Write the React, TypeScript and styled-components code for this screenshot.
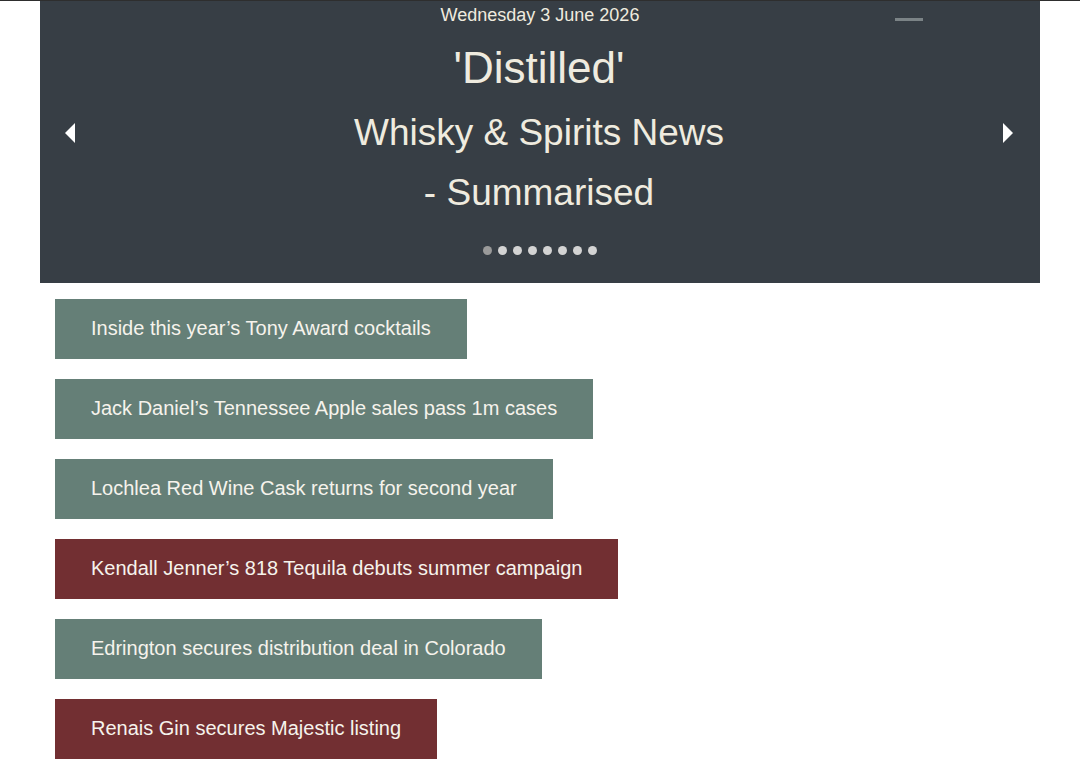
import React from 'react'
import styled, { createGlobalStyle } from 'styled-components'

const GlobalStyle = createGlobalStyle`
  html, body {
    margin: 0;
    padding: 0;
    background: #ffffff;
    font-family: 'Liberation Sans', Arial, sans-serif;
  }
`

const Page = styled.div`
  border-top: 1px solid #2e2e2e;
  min-height: 769px;
`

const Hero = styled.header`
  position: relative;
  margin: 0 40px;
  height: 282px;
  background: #373e45;
  color: #efebdf;
  display: flex;
  flex-direction: column;
  align-items: center;
`

const DateLine = styled.div`
  font-size: 18px;
  line-height: 29px;
`

const Minimise = styled.span`
  position: absolute;
  top: 17px;
  left: 855px;
  width: 28px;
  height: 3px;
  background: #7b8386;
`

const Stage = styled.div`
  width: 100%;
  box-sizing: border-box;
  padding: 0 27px 0 25px;
  display: grid;
  grid-template-columns: 10px 1fr 10px;
  align-items: center;
`

const Arrow = styled.button<{ $dir: 'left' | 'right' }>`
  width: 0;
  height: 0;
  padding: 0;
  margin-top: 12px;
  background: none;
  cursor: pointer;
  border-top: 10px solid transparent;
  border-bottom: 10px solid transparent;
  border-left: ${p => (p.$dir === 'right' ? '10px solid #ffffff' : '0')};
  border-right: ${p => (p.$dir === 'left' ? '10px solid #ffffff' : '0')};
`

const Slide = styled.div`
  text-align: center;
`

const Title = styled.h1`
  margin: 10px 0 0;
  font-size: 44px;
  line-height: 56px;
  font-weight: 400;
`

const Subtitle = styled.h2<{ $tight?: boolean }>`
  margin: ${p => (p.$tight ? '0' : '7px')} 0 0;
  font-size: 37px;
  line-height: 60px;
  font-weight: 400;
`

const Dots = styled.div`
  display: flex;
  gap: 6px;
  margin-top: 23px;
`

const Dot = styled.span<{ $active?: boolean }>`
  width: 9px;
  height: 9px;
  border-radius: 50%;
  background: ${p => (p.$active ? '#9a9a9a' : '#d3d3d3')};
`

const List = styled.ul`
  list-style: none;
  margin: 0;
  padding: 16px 0 0 55px;
  display: flex;
  flex-direction: column;
  align-items: flex-start;
  gap: 20px;
`

const Story = styled.li<{ $tone: 'green' | 'red' }>`
  height: 60px;
  box-sizing: border-box;
  padding: 0 36px 2px;
  display: flex;
  align-items: center;
  font-size: 20px;
  color: #f6f3ec;
  background: ${p => (p.$tone === 'red' ? '#722f32' : '#657f77')};
`

const stories: { title: string; tone: 'green' | 'red' }[] = [
  { title: 'Inside this year’s Tony Award cocktails', tone: 'green' },
  { title: 'Jack Daniel’s Tennessee Apple sales pass 1m cases', tone: 'green' },
  { title: 'Lochlea Red Wine Cask returns for second year', tone: 'green' },
  { title: 'Kendall Jenner’s 818 Tequila debuts summer campaign', tone: 'red' },
  { title: 'Edrington secures distribution deal in Colorado', tone: 'green' },
  { title: 'Renais Gin secures Majestic listing', tone: 'red' },
]

export default function App() {
  return (
    <Page>
      <GlobalStyle />
      <Hero>
        <DateLine>Wednesday 3 June 2026</DateLine>
        <Minimise />
        <Stage>
          <Arrow $dir="left" aria-label="Previous" />
          <Slide>
            <Title>'Distilled'</Title>
            <Subtitle>Whisky &amp; Spirits News</Subtitle>
            <Subtitle as="div" $tight>- Summarised</Subtitle>
          </Slide>
          <Arrow $dir="right" aria-label="Next" />
        </Stage>
        <Dots>
          {Array.from({ length: 8 }).map((_, i) => (
            <Dot key={i} $active={i === 0} />
          ))}
        </Dots>
      </Hero>
      <List>
        {stories.map(s => (
          <Story key={s.title} $tone={s.tone}>{s.title}</Story>
        ))}
      </List>
    </Page>
  )
}
